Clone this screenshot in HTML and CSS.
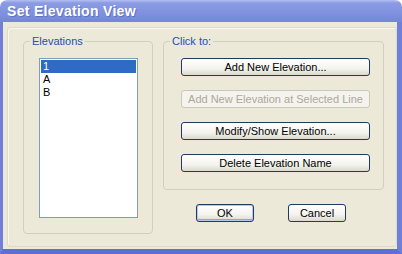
FILE: index.html
```html
<!DOCTYPE html>
<html lang="en">
<head>
    <meta charset="UTF-8">
    <title>Set Elevation View</title>
    <link rel="stylesheet" href="styles.css">
</head>
<body>
    <div class="window">
        <div class="titlebar">Set Elevation View</div>
        <div class="client">
            <div class="frame">
                <!-- Left: list of elevations -->
                <div class="group elevations">
                    <span class="legend">Elevations</span>
                    <ul class="listbox">
                        <li class="selected">1</li>
                        <li>A</li>
                        <li>B</li>
                    </ul>
                </div>

                <!-- Right: actions -->
                <div class="right">
                    <div class="group actions">
                        <span class="legend">Click to:</span>
                        <button class="btn wide">Add New Elevation...</button>
                        <button class="btn wide" disabled>Add New Elevation at Selected Line</button>
                        <button class="btn wide">Modify/Show Elevation...</button>
                        <button class="btn wide">Delete Elevation Name</button>
                    </div>
                    <div class="dialog-buttons">
                        <button class="btn small default">OK</button>
                        <button class="btn small">Cancel</button>
                    </div>
                </div>
            </div>
        </div>
    </div>
</body>
</html>
```

FILE: styles.css
```css
/* General */
body {
    margin: 0;
    background-color: #ffffff;
    font-family: "Liberation Sans", Arial, sans-serif;
    font-size: 11px;
}

.window {
    width: 402px;
    height: 254px;
    overflow: hidden;
}

/* Title bar */
.titlebar {
    height: 22px;
    box-sizing: border-box;
    padding: 3px 0 0 7px;
    border-radius: 7px 7px 0 0;
    background: linear-gradient(to bottom, #b3bff2 0px, #8b9be4 3px, #8092e0 12px, #7586da 22px);
    color: #ffffff;
    font-size: 14px;
    font-weight: bold;
    letter-spacing: 0.3px;
    text-shadow: 1px 1px 0 #6270c0;
}

.client {
    height: 232px;
    box-sizing: border-box;
    background-color: #ece9d8;
    border-left: 3px solid #6f80da;
    border-right: 5px solid #6f80da;
    border-bottom: 5px solid #5d6fd3;
    padding: 5px 0 2px 4px;
}

.frame {
    display: flex;
    height: 100%;
    box-sizing: border-box;
    border: 1px solid #dedbcb;
    box-shadow: inset 1px 1px 0 #f8f7f1;
    border-radius: 3px;
    padding: 13px 9px 0 15px;
    gap: 10px;
}

/* Group boxes */
.group {
    position: relative;
    box-sizing: border-box;
    border: 1px solid #d0d0bf;
    border-radius: 4px;
}

.legend {
    position: absolute;
    top: -7px;
    left: 6px;
    padding: 0 2px;
    background-color: #ece9d8;
    color: #1c4fb8;
    line-height: 13px;
}

.elevations {
    width: 130px;
    height: 193px;
    padding: 16px 0 0 15px;
}

.listbox {
    list-style: none;
    margin: 0;
    padding: 1px;
    width: 99px;
    height: 160px;
    box-sizing: border-box;
    border: 1px solid #7f9db9;
    background-color: #ffffff;
}

.listbox li {
    height: 13px;
    line-height: 13px;
    padding-left: 2px;
    color: #000000;
}

.listbox li.selected {
    background-color: #316ac5;
    color: #ffffff;
}

.right {
    display: flex;
    flex-direction: column;
    width: 221px;
}

.actions {
    height: 149px;
    display: flex;
    flex-direction: column;
    gap: 14px;
    padding: 16px 0 0 17px;
}

/* Buttons */
.btn {
    box-sizing: border-box;
    height: 18px;
    padding: 0;
    font-family: "Liberation Sans", Arial, sans-serif;
    font-size: 11px;
    color: #000000;
    border: 1px solid #1e3b62;
    border-radius: 3px;
    background: linear-gradient(to bottom, #ffffff 0%, #f4f3ee 60%, #dcd9cc 100%);
}

.btn.wide {
    width: 189px;
}

.btn:disabled {
    border-color: #cac8bb;
    background: #f4f3ee;
    color: #aca899;
}

.dialog-buttons {
    display: flex;
    gap: 34px;
    padding: 14px 0 0 33px;
}

.btn.small {
    width: 58px;
}

.btn.default {
    box-shadow: inset 0 0 0 1px #b5c8f0, inset 0 -1px 0 1px #8aa6e0;
}
```
